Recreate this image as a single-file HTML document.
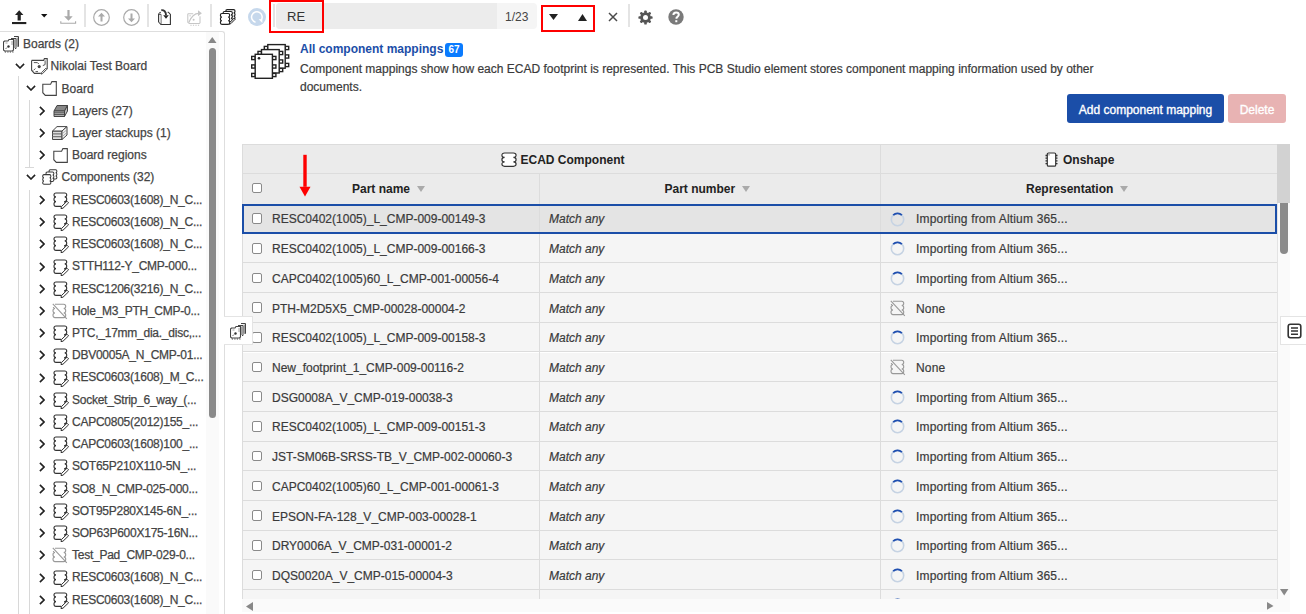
<!DOCTYPE html>
<html><head><meta charset="utf-8">
<style>
*{box-sizing:border-box;margin:0;padding:0}
html,body{width:1306px;height:614px;overflow:hidden;background:#fff;font-family:"Liberation Sans",sans-serif;color:#333;font-size:12px}
.abs{position:absolute}
.sep{position:absolute;top:4px;width:2px;height:23px;background:#e4e4e4}
#tree{position:absolute;left:0;top:31px;width:225px;height:583px;border-top:1px solid #dedede;border-right:1px solid #dedede;border-top-right-radius:3px;overflow:hidden;background:#fff}
.trow{position:absolute;left:0;width:205px;height:22.25px}
.chev{position:absolute}
.ticon{position:absolute;line-height:0}
.ttext{position:absolute;top:2.5px;white-space:nowrap;line-height:15px;color:#444;-webkit-text-stroke:.25px #444}
.trow:nth-child(n+8) .ttext{letter-spacing:-0.25px}
.guide{position:absolute;width:1px;background:#d8d8d8}
.drow{position:absolute;left:242px;width:1035px;height:29.7px;background:#f5f5f5;border-bottom:1px solid #dcdcdc}
.drow.sel{background:#e4e4e4;border:2px solid #1b4ea8;}
.cb{position:absolute;width:10.6px;height:10.6px;border:1px solid #8a8a8a;border-radius:2px;background:#fff}
.dname{position:absolute;left:30px;top:8.6px;line-height:15px;white-space:nowrap;color:#3a3a3a;-webkit-text-stroke:.2px #3a3a3a}
.dmatch{position:absolute;left:307px;top:8.6px;line-height:15px;font-style:italic;white-space:nowrap;color:#3a3a3a;-webkit-text-stroke:.2px #3a3a3a}
.dicon{position:absolute;left:648px;top:7.5px;line-height:0}
.drep{position:absolute;left:674px;top:8.6px;letter-spacing:.18px;line-height:15px;white-space:nowrap;color:#3a3a3a;-webkit-text-stroke:.2px #3a3a3a}
.drow.sel .cb{left:7.5px!important;top:7.3px!important}
.drow.sel .dname{left:28px;top:5.6px}
.drow.sel .dmatch{left:305px;top:5.6px}
.drow.sel .dicon{left:646px;top:5.5px}
.drow.sel .drep{left:672px;top:5.6px}
.vcol{position:absolute;width:1px;background:#dcdcdc}
.hdr{position:absolute;font-weight:bold;color:#222;white-space:nowrap;line-height:15px}
.sorta{display:inline-block;width:0;height:0;border-left:4.5px solid transparent;border-right:4.5px solid transparent;border-top:6px solid #aaa;margin-left:6.5px;vertical-align:1px}
</style></head><body>

<!-- toolbar -->
<svg class="abs" style="left:12px;top:10px" width="15" height="15" viewBox="0 0 15 15"><path d="M7.2 .2L3 5H5.6V10.4H8.8V5H11.4z" fill="#222"/><rect x="0" y="12" width="14.3" height="2.1" fill="#222"/></svg>
<svg class="abs" style="left:41px;top:13.8px" width="7" height="4" viewBox="0 0 7 4"><path d="M0 0h6.4L3.2 3.6z" fill="#111"/></svg>
<svg class="abs" style="left:60px;top:10px" width="17" height="15" viewBox="0 0 17 15"><path d="M7.4 0h2.2v6.2h3.1L8.5 10.7 4.1 6.2h3.3z" fill="#aaa"/><path d="M.8 11.2v2.1h14.8v-2.1" fill="none" stroke="#aaa" stroke-width="1.1"/></svg>
<div class="sep" style="left:84px"></div>
<svg class="abs" style="left:93px;top:8.5px" width="17" height="17" viewBox="0 0 17 17"><circle cx="8.5" cy="8.5" r="7.8" fill="none" stroke="#aaa" stroke-width="1.2"/><path d="M8.5 3.8L5 7.5h2.5v5h2v-5H12z" fill="#aaa"/></svg>
<svg class="abs" style="left:122.5px;top:8.5px" width="17" height="17" viewBox="0 0 17 17"><circle cx="8.5" cy="8.5" r="7.8" fill="none" stroke="#aaa" stroke-width="1.2"/><path d="M8.5 13.2L5 9.5h2.5v-5h2v5H12z" fill="#aaa"/></svg>
<div class="sep" style="left:147px"></div>
<svg class="abs" style="left:158px;top:9px" width="13" height="16" viewBox="0 0 13 16" fill="none" stroke="#333" stroke-width="1.1"><path d="M3 5.3H.6v7.6l2.4 2.6h9.4V5.4L10.4 3.2H9.6" /><path d="M.6 5.3L1.6 3.4H3M3 5.3v10.2" stroke="#555" stroke-width="1"/><path d="M1.2 6v7l1.4 1.5V6z" fill="#ddd" stroke="none"/><path d="M3.3 1.2C6 .9 8 2.6 8 6" stroke-width="1.9"/><path d="M5.2 6.2h5.6L8 9.8z" fill="#222" stroke="none"/></svg>
<svg class="abs" style="left:186.5px;top:9.5px" width="15" height="16" viewBox="0 0 15 16" fill="none" stroke="#c6c6c6" stroke-width="1.05"><path d="M.8 3.8H6.2M.8 3.8V12.3L2.3 13.5H12.3L13 12.8V6.3"/><path d="M2.2 5.8H4" stroke-width=".8"/><circle cx="6.6" cy="9.7" r="1" fill="#c6c6c6" stroke="none"/><path d="M1.8 12.4C3.6 8 6.6 3.3 11.8 3.3" stroke-width="1.3"/><path d="M11 .2L14.9 3.3 11 6.3z" fill="#c6c6c6" stroke="none"/><path d="M3.4 15.2h1.2M5.9 15.2h1.2M8.4 15.2h1.2M10.9 15.2h1.2" stroke-width="1.1"/></svg>
<div class="sep" style="left:209.5px"></div>
<svg class="abs" style="left:219px;top:9px" width="17" height="16" viewBox="0 0 17 16" fill="#fff" stroke="#222" stroke-width="1.2"><path d="M8.20 0.70H14.60C16.46 0.70 16.46 3.93 14.60 3.93C16.46 3.93 16.46 7.17 14.60 7.17C16.46 7.17 16.46 10.40 14.60 10.40H8.20C6.34 10.40 6.34 7.17 8.20 7.17C6.34 7.17 6.34 3.93 8.20 3.93C6.34 3.93 6.34 0.70 8.20 0.70Z"/><path d="M5.50 2.50H12.00C13.86 2.50 13.86 5.87 12.00 5.87C13.86 5.87 13.86 9.23 12.00 9.23C13.86 9.23 13.86 12.60 12.00 12.60H5.50C3.64 12.60 3.64 9.23 5.50 9.23C3.64 9.23 3.64 5.87 5.50 5.87C3.64 5.87 3.64 2.50 5.50 2.50Z"/><path d="M2.90 4.50H9.20C11.20 4.50 11.20 8.10 9.20 8.10C11.20 8.10 11.20 11.70 9.20 11.70C11.20 11.70 11.20 15.30 9.20 15.30H2.90C0.90 15.30 0.90 11.70 2.90 11.70C0.90 11.70 0.90 8.10 2.90 8.10C0.90 8.10 0.90 4.50 2.90 4.50Z"/><path d="M16.2 10.2L11.9 14.6L10.3 15.2L10.8 13.6L15.1 9.1Z" stroke-width="1"/></svg>
<svg class="abs" style="left:248px;top:8.2px" width="18" height="18" viewBox="0 0 18 18"><circle cx="9" cy="9" r="9" fill="#c6d8ec"/><path d="M7.6 14.2A5.3 5.3 0 1 1 12.8 12.6" fill="none" stroke="#fff" stroke-width="1.5"/><path d="M10.6 11.3h3.8v3.8z" fill="#fff"/><path d="M9 12.8v3.5" stroke="#c6d8ec" stroke-width="2.2"/></svg>

<!-- search -->
<div class="abs" style="left:273px;top:4px;width:2px;height:23px;background:#e4e4e4"></div>
<div class="abs" style="left:276px;top:3px;width:261px;height:25.5px;background:#f5f5f5;border-radius:4px"></div>
<div class="abs" style="left:276px;top:3px;width:220.5px;height:25.5px;background:#ececec;border-radius:4px 0 0 4px"></div>
<div class="abs" style="left:287px;top:8.5px;font-size:13px;line-height:16px;color:#333">RE</div>
<div class="abs" style="left:505px;top:10px;font-size:12px;line-height:15px;color:#444">1/23</div>
<div class="abs" style="left:268.5px;top:-0.2px;width:55px;height:33.2px;border:2.5px solid #fe0000"></div>
<div class="abs" style="left:541px;top:4.5px;width:54px;height:27.5px;border:2.3px solid #fe0000"></div>
<svg class="abs" style="left:548.5px;top:14px" width="9" height="6" viewBox="0 0 9 6"><path d="M0 0h9L4.5 6z" fill="#222"/></svg>
<svg class="abs" style="left:578px;top:13.5px" width="9" height="7" viewBox="0 0 9 7"><path d="M0 7h9L4.5 0z" fill="#222"/></svg>
<svg class="abs" style="left:607.5px;top:12px" width="10" height="10" viewBox="0 0 10 10"><path d="M1 1l8 8M9 1L1 9" stroke="#4a4a4a" stroke-width="1.5"/></svg>
<div class="sep" style="left:628px;width:1.5px"></div>
<svg class="abs" style="left:637.7px;top:9.6px" width="15" height="15" viewBox="-7.5 -7.5 15 15"><g fill="#555"><circle r="5.3"/><rect x="-1.3" y="-7.1" width="2.6" height="3" rx=".9" transform="rotate(0)"/><rect x="-1.3" y="-7.1" width="2.6" height="3" rx=".9" transform="rotate(45)"/><rect x="-1.3" y="-7.1" width="2.6" height="3" rx=".9" transform="rotate(90)"/><rect x="-1.3" y="-7.1" width="2.6" height="3" rx=".9" transform="rotate(135)"/><rect x="-1.3" y="-7.1" width="2.6" height="3" rx=".9" transform="rotate(180)"/><rect x="-1.3" y="-7.1" width="2.6" height="3" rx=".9" transform="rotate(225)"/><rect x="-1.3" y="-7.1" width="2.6" height="3" rx=".9" transform="rotate(270)"/><rect x="-1.3" y="-7.1" width="2.6" height="3" rx=".9" transform="rotate(315)"/></g><circle r="2.5" fill="#fff"/></svg>
<svg class="abs" style="left:667.5px;top:9.3px" width="16" height="16" viewBox="0 0 16 16"><circle cx="8" cy="8" r="7.7" fill="#7a7a7a"/><path d="M5.4 6.1c0-1.7 1.2-2.6 2.7-2.6s2.7 .9 2.7 2.3c0 1.6-1.9 1.9-2.3 3.1v.8" fill="none" stroke="#fff" stroke-width="2"/><rect x="7.3" y="11.2" width="2" height="2" fill="#fff"/></svg>

<!-- tree -->
<div id="tree">
<div class="guide" style="left:18px;top:44px;height:540px"></div>
<div class="guide" style="left:29px;top:68px;height:67px"></div>
<div class="guide" style="left:25px;top:135px;height:1px;width:9px"></div>
<div class="guide" style="left:29px;top:157.5px;height:430px"></div>
<div style="position:absolute;left:0;top:-31px">
<div class="trow" style="top:33.60px">
<span class="ticon" style="left:3px;top:1.4px"><svg width="17" height="17" viewBox="0 0 17 17" fill="none" stroke="#444" stroke-width="1"><path d="M11 .5H15.5V10.5H14.5"/><path d="M14.3 1.5V10" stroke="#999" stroke-width="1.3"/><path d="M8 2.5H13V12.5H12"/><path d="M11.8 3.5V12" stroke="#999" stroke-width="1.3"/><path d="M.5 6L1.5 5H5L6 3.5H10.5V14L9.5 15H1.5L.5 14Z" fill="#fff" stroke-width="1.1"/><path d="M2.5 7H4.5M9 5V9" stroke="#888" stroke-width=".8"/><circle cx="5.5" cy="10.5" r="1.2" fill="#333" stroke="none"/><path d="M2.5 13L4 11.5" stroke-width=".8"/><path d="M1.8 16H3M4.3 16H5.5M6.8 16H8M9.3 16H10.5" stroke-width="1.1"/></svg></span>
<span class="ttext" style="left:23px">Boards (2)</span>
</div>
<div class="trow" style="top:55.82px">
<svg class="chev" style="left:15px;top:6.3px" width="10" height="6" viewBox="0 0 10 6"><path d="M.9 .9l4.1 4.1L9.1 .9" fill="none" stroke="#222" stroke-width="1.6"/></svg>
<span class="ticon" style="left:30.5px;top:1.25px"><svg width="17" height="17" viewBox="0 0 17 17" fill="none" stroke="#444" stroke-width="1.1"><path d="M.6 2.4H12.6L13.4 .6H16.2V11M.6 2.4V12.2L3.4 15.4H9.8"/><path d="M2.8 4.6H6.4L7.9 6.1M14.1 2.4V6.6L11.8 7.6M2.6 12.3L4.4 10.5M4.5 13.6H7" stroke-width=".9"/><circle cx="8.2" cy="8.6" r="1.6" fill="#444" stroke="none"/><path d="M15.9 11.2L11.6 15.6L10.1 16.1L10.6 14.6L14.9 10.2Z" stroke-width="1" fill="#fff"/></svg></span>
<span class="ttext" style="left:50.6px">Nikolai Test Board</span>
</div>
<div class="trow" style="top:78.04px">
<svg class="chev" style="left:25.8px;top:6.3px" width="10" height="6" viewBox="0 0 10 6"><path d="M.9 .9l4.1 4.1L9.1 .9" fill="none" stroke="#222" stroke-width="1.6"/></svg>
<span class="ticon" style="left:42px;top:2.3px"><svg width="15" height="15" viewBox="0 0 15 15" fill="none" stroke="#444" stroke-width="1.1"><path d="M0.8 3.2h7.8l1.3-2.6h4.4v13.8h-11l-2.5-2.7z"/></svg></span>
<span class="ttext" style="left:61.6px">Board</span>
</div>
<div class="trow" style="top:100.26px">
<svg class="chev" style="left:38.5px;top:4.8px" width="6" height="10" viewBox="0 0 6 10"><path d="M.9 .9l4.1 4.1L.9 9.1" fill="none" stroke="#222" stroke-width="1.6"/></svg>
<span class="ticon" style="left:52.6px;top:3.5px"><svg width="15" height="13" viewBox="0 0 15 13" fill="none" stroke="#444" stroke-width="1"><path d="M4 .5h10.5l-3 5.5h-10.5z" fill="#888"/><path d="M1 6h10.5v5.5h-10.5zM11.5 6l3-5.5v5.5l-3 5.5" fill="#bbb"/><path d="M1 7.8h10.5M1 9.6h10.5" stroke-width=".9"/><path d="M1.5 11.5h10" stroke="#444"/></svg></span>
<span class="ttext" style="left:72px">Layers (27)</span>
</div>
<div class="trow" style="top:122.48px">
<svg class="chev" style="left:38.5px;top:4.8px" width="6" height="10" viewBox="0 0 6 10"><path d="M.9 .9l4.1 4.1L.9 9.1" fill="none" stroke="#222" stroke-width="1.6"/></svg>
<span class="ticon" style="left:52px;top:2.3px"><svg width="16" height="14" viewBox="0 0 16 14" fill="none" stroke="#444" stroke-width="1"><path d="M.5 5h9.5v8.5H.5z" fill="#ddd"/><path d="M.5 7.8h9.5M.5 10.6h9.5" stroke="#777" stroke-width="1.2"/><path d="M.5 5L5 .6H15L10 5z" fill="#fff"/><path d="M10 5L15 .6V9L10 13.5z" fill="#f2f2f2"/><path d="M10 8l5-4.4M10 10.8l5-4.4" stroke="#999" stroke-width=".8"/></svg></span>
<span class="ttext" style="left:72px">Layer stackups (1)</span>
</div>
<div class="trow" style="top:144.70px">
<svg class="chev" style="left:38.5px;top:4.8px" width="6" height="10" viewBox="0 0 6 10"><path d="M.9 .9l4.1 4.1L.9 9.1" fill="none" stroke="#222" stroke-width="1.6"/></svg>
<span class="ticon" style="left:52.6px;top:2.3px"><svg width="15" height="15" viewBox="0 0 15 15" fill="none" stroke="#444" stroke-width="1.1"><path d="M0.8 3.2h7.8l1.3-2.6h4.4v13.8h-11l-2.5-2.7z"/></svg></span>
<span class="ttext" style="left:72px">Board regions</span>
</div>
<div class="trow" style="top:166.92px">
<svg class="chev" style="left:25.8px;top:6.3px" width="10" height="6" viewBox="0 0 10 6"><path d="M.9 .9l4.1 4.1L9.1 .9" fill="none" stroke="#222" stroke-width="1.6"/></svg>
<span class="ticon" style="left:40.6px;top:1.4px"><svg width="17" height="16" viewBox="0 0 17 16" fill="#fff" stroke="#3a3a3a" stroke-width="1.05"><path d="M9.30 0.70H14.60C16.33 0.70 16.33 3.80 14.60 3.80C16.33 3.80 16.33 6.90 14.60 6.90C16.33 6.90 16.33 10.00 14.60 10.00H9.30C7.57 10.00 7.57 6.90 9.30 6.90C7.57 6.90 7.57 3.80 9.30 3.80C7.57 3.80 7.57 0.70 9.30 0.70Z"/><path d="M6.30 2.90H11.60C13.33 2.90 13.33 6.07 11.60 6.07C13.33 6.07 13.33 9.23 11.60 9.23C13.33 9.23 13.33 12.40 11.60 12.40H6.30C4.57 12.40 4.57 9.23 6.30 9.23C4.57 9.23 4.57 6.07 6.30 6.07C4.57 6.07 4.57 2.90 6.30 2.90Z"/><path d="M3.00 5.60H8.60C10.33 5.60 10.33 8.83 8.60 8.83C10.33 8.83 10.33 12.07 8.60 12.07C10.33 12.07 10.33 15.30 8.60 15.30H3.00C1.27 15.30 1.27 12.07 3.00 12.07C1.27 12.07 1.27 8.83 3.00 8.83C1.27 8.83 1.27 5.60 3.00 5.60Z"/></svg></span>
<span class="ttext" style="left:61.6px">Components (32)</span>
</div>
<div class="trow" style="top:189.14px">
<svg class="chev" style="left:38.5px;top:4.8px" width="6" height="10" viewBox="0 0 6 10"><path d="M.9 .9l4.1 4.1L.9 9.1" fill="none" stroke="#222" stroke-width="1.6"/></svg>
<span class="ticon" style="left:52.6px;top:1.85px"><svg width="16" height="17" viewBox="0 0 16 17" fill="none" stroke="#333" stroke-width="1.1"><path d="M3 1H11.7C14.4 1 14.4 4.9 11.7 4.9C14.4 4.9 14.4 9.6 11.7 9.6V10.8M3 1C.3 1 .3 4.9 3 4.9C.3 4.9 .3 9.6 3 9.6C.3 9.6 .3 14.4 3 14.4H8.2"/><path d="M14 9.2l1.6 1.6-5.6 5.4-2 .4.4-2z" stroke-width="1"/></svg></span>
<span class="ttext" style="left:72px">RESC0603(1608)_N_C...</span>
</div>
<div class="trow" style="top:211.36px">
<svg class="chev" style="left:38.5px;top:4.8px" width="6" height="10" viewBox="0 0 6 10"><path d="M.9 .9l4.1 4.1L.9 9.1" fill="none" stroke="#222" stroke-width="1.6"/></svg>
<span class="ticon" style="left:52.6px;top:1.85px"><svg width="16" height="17" viewBox="0 0 16 17" fill="none" stroke="#333" stroke-width="1.1"><path d="M3 1H11.7C14.4 1 14.4 4.9 11.7 4.9C14.4 4.9 14.4 9.6 11.7 9.6V10.8M3 1C.3 1 .3 4.9 3 4.9C.3 4.9 .3 9.6 3 9.6C.3 9.6 .3 14.4 3 14.4H8.2"/><path d="M14 9.2l1.6 1.6-5.6 5.4-2 .4.4-2z" stroke-width="1"/></svg></span>
<span class="ttext" style="left:72px">RESC0603(1608)_N_C...</span>
</div>
<div class="trow" style="top:233.58px">
<svg class="chev" style="left:38.5px;top:4.8px" width="6" height="10" viewBox="0 0 6 10"><path d="M.9 .9l4.1 4.1L.9 9.1" fill="none" stroke="#222" stroke-width="1.6"/></svg>
<span class="ticon" style="left:52.6px;top:1.85px"><svg width="16" height="17" viewBox="0 0 16 17" fill="none" stroke="#333" stroke-width="1.1"><path d="M3 1H11.7C14.4 1 14.4 4.9 11.7 4.9C14.4 4.9 14.4 9.6 11.7 9.6V10.8M3 1C.3 1 .3 4.9 3 4.9C.3 4.9 .3 9.6 3 9.6C.3 9.6 .3 14.4 3 14.4H8.2"/><path d="M14 9.2l1.6 1.6-5.6 5.4-2 .4.4-2z" stroke-width="1"/></svg></span>
<span class="ttext" style="left:72px">RESC0603(1608)_N_C...</span>
</div>
<div class="trow" style="top:255.80px">
<svg class="chev" style="left:38.5px;top:4.8px" width="6" height="10" viewBox="0 0 6 10"><path d="M.9 .9l4.1 4.1L.9 9.1" fill="none" stroke="#222" stroke-width="1.6"/></svg>
<span class="ticon" style="left:52.6px;top:1.85px"><svg width="16" height="17" viewBox="0 0 16 17" fill="none" stroke="#333" stroke-width="1.1"><path d="M3 1H11.7C14.4 1 14.4 4.9 11.7 4.9C14.4 4.9 14.4 9.6 11.7 9.6V10.8M3 1C.3 1 .3 4.9 3 4.9C.3 4.9 .3 9.6 3 9.6C.3 9.6 .3 14.4 3 14.4H8.2"/><path d="M14 9.2l1.6 1.6-5.6 5.4-2 .4.4-2z" stroke-width="1"/></svg></span>
<span class="ttext" style="left:72px">STTH112-Y_CMP-000...</span>
</div>
<div class="trow" style="top:278.02px">
<svg class="chev" style="left:38.5px;top:4.8px" width="6" height="10" viewBox="0 0 6 10"><path d="M.9 .9l4.1 4.1L.9 9.1" fill="none" stroke="#222" stroke-width="1.6"/></svg>
<span class="ticon" style="left:52.6px;top:1.85px"><svg width="16" height="17" viewBox="0 0 16 17" fill="none" stroke="#333" stroke-width="1.1"><path d="M3 1H11.7C14.4 1 14.4 4.9 11.7 4.9C14.4 4.9 14.4 9.6 11.7 9.6V10.8M3 1C.3 1 .3 4.9 3 4.9C.3 4.9 .3 9.6 3 9.6C.3 9.6 .3 14.4 3 14.4H8.2"/><path d="M14 9.2l1.6 1.6-5.6 5.4-2 .4.4-2z" stroke-width="1"/></svg></span>
<span class="ttext" style="left:72px">RESC1206(3216)_N_C...</span>
</div>
<div class="trow" style="top:300.24px">
<svg class="chev" style="left:38.5px;top:4.8px" width="6" height="10" viewBox="0 0 6 10"><path d="M.9 .9l4.1 4.1L.9 9.1" fill="none" stroke="#222" stroke-width="1.6"/></svg>
<span class="ticon" style="left:52.4px;top:1.5px"><svg width="16" height="17" viewBox="0 0 16 17" fill="none" stroke="#999" stroke-width="1.1"><path d="M3 1.2H11.7C14.4 1.2 14.4 5.5 11.7 5.5C14.4 5.5 14.4 10 11.7 10C14.4 10 14.4 14.6 11.7 14.6H3C.3 14.6 .3 10 3 10C.3 10 .3 5.5 3 5.5C2 5.5 1.4 4.8 1.3 4"/><path d="M.8 .8l14 15" stroke-width="1.1"/></svg></span>
<span class="ttext" style="left:72px">Hole_M3_PTH_CMP-0...</span>
</div>
<div class="trow" style="top:322.46px">
<svg class="chev" style="left:38.5px;top:4.8px" width="6" height="10" viewBox="0 0 6 10"><path d="M.9 .9l4.1 4.1L.9 9.1" fill="none" stroke="#222" stroke-width="1.6"/></svg>
<span class="ticon" style="left:52.6px;top:1.85px"><svg width="16" height="17" viewBox="0 0 16 17" fill="none" stroke="#333" stroke-width="1.1"><path d="M3 1H11.7C14.4 1 14.4 4.9 11.7 4.9C14.4 4.9 14.4 9.6 11.7 9.6V10.8M3 1C.3 1 .3 4.9 3 4.9C.3 4.9 .3 9.6 3 9.6C.3 9.6 .3 14.4 3 14.4H8.2"/><path d="M14 9.2l1.6 1.6-5.6 5.4-2 .4.4-2z" stroke-width="1"/></svg></span>
<span class="ttext" style="left:72px">PTC,_17mm_dia._disc,...</span>
</div>
<div class="trow" style="top:344.68px">
<svg class="chev" style="left:38.5px;top:4.8px" width="6" height="10" viewBox="0 0 6 10"><path d="M.9 .9l4.1 4.1L.9 9.1" fill="none" stroke="#222" stroke-width="1.6"/></svg>
<span class="ticon" style="left:52.6px;top:1.85px"><svg width="16" height="17" viewBox="0 0 16 17" fill="none" stroke="#333" stroke-width="1.1"><path d="M3 1H11.7C14.4 1 14.4 4.9 11.7 4.9C14.4 4.9 14.4 9.6 11.7 9.6V10.8M3 1C.3 1 .3 4.9 3 4.9C.3 4.9 .3 9.6 3 9.6C.3 9.6 .3 14.4 3 14.4H8.2"/><path d="M14 9.2l1.6 1.6-5.6 5.4-2 .4.4-2z" stroke-width="1"/></svg></span>
<span class="ttext" style="left:72px">DBV0005A_N_CMP-01...</span>
</div>
<div class="trow" style="top:366.90px">
<svg class="chev" style="left:38.5px;top:4.8px" width="6" height="10" viewBox="0 0 6 10"><path d="M.9 .9l4.1 4.1L.9 9.1" fill="none" stroke="#222" stroke-width="1.6"/></svg>
<span class="ticon" style="left:52.6px;top:1.85px"><svg width="16" height="17" viewBox="0 0 16 17" fill="none" stroke="#333" stroke-width="1.1"><path d="M3 1H11.7C14.4 1 14.4 4.9 11.7 4.9C14.4 4.9 14.4 9.6 11.7 9.6V10.8M3 1C.3 1 .3 4.9 3 4.9C.3 4.9 .3 9.6 3 9.6C.3 9.6 .3 14.4 3 14.4H8.2"/><path d="M14 9.2l1.6 1.6-5.6 5.4-2 .4.4-2z" stroke-width="1"/></svg></span>
<span class="ttext" style="left:72px">RESC0603(1608)_M_C...</span>
</div>
<div class="trow" style="top:389.12px">
<svg class="chev" style="left:38.5px;top:4.8px" width="6" height="10" viewBox="0 0 6 10"><path d="M.9 .9l4.1 4.1L.9 9.1" fill="none" stroke="#222" stroke-width="1.6"/></svg>
<span class="ticon" style="left:52.6px;top:1.85px"><svg width="16" height="17" viewBox="0 0 16 17" fill="none" stroke="#333" stroke-width="1.1"><path d="M3 1H11.7C14.4 1 14.4 4.9 11.7 4.9C14.4 4.9 14.4 9.6 11.7 9.6V10.8M3 1C.3 1 .3 4.9 3 4.9C.3 4.9 .3 9.6 3 9.6C.3 9.6 .3 14.4 3 14.4H8.2"/><path d="M14 9.2l1.6 1.6-5.6 5.4-2 .4.4-2z" stroke-width="1"/></svg></span>
<span class="ttext" style="left:72px">Socket_Strip_6_way_(...</span>
</div>
<div class="trow" style="top:411.34px">
<svg class="chev" style="left:38.5px;top:4.8px" width="6" height="10" viewBox="0 0 6 10"><path d="M.9 .9l4.1 4.1L.9 9.1" fill="none" stroke="#222" stroke-width="1.6"/></svg>
<span class="ticon" style="left:52.6px;top:1.85px"><svg width="16" height="17" viewBox="0 0 16 17" fill="none" stroke="#333" stroke-width="1.1"><path d="M3 1H11.7C14.4 1 14.4 4.9 11.7 4.9C14.4 4.9 14.4 9.6 11.7 9.6V10.8M3 1C.3 1 .3 4.9 3 4.9C.3 4.9 .3 9.6 3 9.6C.3 9.6 .3 14.4 3 14.4H8.2"/><path d="M14 9.2l1.6 1.6-5.6 5.4-2 .4.4-2z" stroke-width="1"/></svg></span>
<span class="ttext" style="left:72px">CAPC0805(2012)155_...</span>
</div>
<div class="trow" style="top:433.56px">
<svg class="chev" style="left:38.5px;top:4.8px" width="6" height="10" viewBox="0 0 6 10"><path d="M.9 .9l4.1 4.1L.9 9.1" fill="none" stroke="#222" stroke-width="1.6"/></svg>
<span class="ticon" style="left:52.6px;top:1.85px"><svg width="16" height="17" viewBox="0 0 16 17" fill="none" stroke="#333" stroke-width="1.1"><path d="M3 1H11.7C14.4 1 14.4 4.9 11.7 4.9C14.4 4.9 14.4 9.6 11.7 9.6V10.8M3 1C.3 1 .3 4.9 3 4.9C.3 4.9 .3 9.6 3 9.6C.3 9.6 .3 14.4 3 14.4H8.2"/><path d="M14 9.2l1.6 1.6-5.6 5.4-2 .4.4-2z" stroke-width="1"/></svg></span>
<span class="ttext" style="left:72px">CAPC0603(1608)100_...</span>
</div>
<div class="trow" style="top:455.78px">
<svg class="chev" style="left:38.5px;top:4.8px" width="6" height="10" viewBox="0 0 6 10"><path d="M.9 .9l4.1 4.1L.9 9.1" fill="none" stroke="#222" stroke-width="1.6"/></svg>
<span class="ticon" style="left:52.6px;top:1.85px"><svg width="16" height="17" viewBox="0 0 16 17" fill="none" stroke="#333" stroke-width="1.1"><path d="M3 1H11.7C14.4 1 14.4 4.9 11.7 4.9C14.4 4.9 14.4 9.6 11.7 9.6V10.8M3 1C.3 1 .3 4.9 3 4.9C.3 4.9 .3 9.6 3 9.6C.3 9.6 .3 14.4 3 14.4H8.2"/><path d="M14 9.2l1.6 1.6-5.6 5.4-2 .4.4-2z" stroke-width="1"/></svg></span>
<span class="ttext" style="left:72px">SOT65P210X110-5N_...</span>
</div>
<div class="trow" style="top:478.00px">
<svg class="chev" style="left:38.5px;top:4.8px" width="6" height="10" viewBox="0 0 6 10"><path d="M.9 .9l4.1 4.1L.9 9.1" fill="none" stroke="#222" stroke-width="1.6"/></svg>
<span class="ticon" style="left:52.6px;top:1.85px"><svg width="16" height="17" viewBox="0 0 16 17" fill="none" stroke="#333" stroke-width="1.1"><path d="M3 1H11.7C14.4 1 14.4 4.9 11.7 4.9C14.4 4.9 14.4 9.6 11.7 9.6V10.8M3 1C.3 1 .3 4.9 3 4.9C.3 4.9 .3 9.6 3 9.6C.3 9.6 .3 14.4 3 14.4H8.2"/><path d="M14 9.2l1.6 1.6-5.6 5.4-2 .4.4-2z" stroke-width="1"/></svg></span>
<span class="ttext" style="left:72px">SO8_N_CMP-025-000...</span>
</div>
<div class="trow" style="top:500.22px">
<svg class="chev" style="left:38.5px;top:4.8px" width="6" height="10" viewBox="0 0 6 10"><path d="M.9 .9l4.1 4.1L.9 9.1" fill="none" stroke="#222" stroke-width="1.6"/></svg>
<span class="ticon" style="left:52.6px;top:1.85px"><svg width="16" height="17" viewBox="0 0 16 17" fill="none" stroke="#333" stroke-width="1.1"><path d="M3 1H11.7C14.4 1 14.4 4.9 11.7 4.9C14.4 4.9 14.4 9.6 11.7 9.6V10.8M3 1C.3 1 .3 4.9 3 4.9C.3 4.9 .3 9.6 3 9.6C.3 9.6 .3 14.4 3 14.4H8.2"/><path d="M14 9.2l1.6 1.6-5.6 5.4-2 .4.4-2z" stroke-width="1"/></svg></span>
<span class="ttext" style="left:72px">SOT95P280X145-6N_...</span>
</div>
<div class="trow" style="top:522.44px">
<svg class="chev" style="left:38.5px;top:4.8px" width="6" height="10" viewBox="0 0 6 10"><path d="M.9 .9l4.1 4.1L.9 9.1" fill="none" stroke="#222" stroke-width="1.6"/></svg>
<span class="ticon" style="left:52.6px;top:1.85px"><svg width="16" height="17" viewBox="0 0 16 17" fill="none" stroke="#333" stroke-width="1.1"><path d="M3 1H11.7C14.4 1 14.4 4.9 11.7 4.9C14.4 4.9 14.4 9.6 11.7 9.6V10.8M3 1C.3 1 .3 4.9 3 4.9C.3 4.9 .3 9.6 3 9.6C.3 9.6 .3 14.4 3 14.4H8.2"/><path d="M14 9.2l1.6 1.6-5.6 5.4-2 .4.4-2z" stroke-width="1"/></svg></span>
<span class="ttext" style="left:72px">SOP63P600X175-16N...</span>
</div>
<div class="trow" style="top:544.66px">
<svg class="chev" style="left:38.5px;top:4.8px" width="6" height="10" viewBox="0 0 6 10"><path d="M.9 .9l4.1 4.1L.9 9.1" fill="none" stroke="#222" stroke-width="1.6"/></svg>
<span class="ticon" style="left:52.4px;top:1.5px"><svg width="16" height="17" viewBox="0 0 16 17" fill="none" stroke="#999" stroke-width="1.1"><path d="M3 1.2H11.7C14.4 1.2 14.4 5.5 11.7 5.5C14.4 5.5 14.4 10 11.7 10C14.4 10 14.4 14.6 11.7 14.6H3C.3 14.6 .3 10 3 10C.3 10 .3 5.5 3 5.5C2 5.5 1.4 4.8 1.3 4"/><path d="M.8 .8l14 15" stroke-width="1.1"/></svg></span>
<span class="ttext" style="left:72px">Test_Pad_CMP-029-0...</span>
</div>
<div class="trow" style="top:566.88px">
<svg class="chev" style="left:38.5px;top:4.8px" width="6" height="10" viewBox="0 0 6 10"><path d="M.9 .9l4.1 4.1L.9 9.1" fill="none" stroke="#222" stroke-width="1.6"/></svg>
<span class="ticon" style="left:52.6px;top:1.85px"><svg width="16" height="17" viewBox="0 0 16 17" fill="none" stroke="#333" stroke-width="1.1"><path d="M3 1H11.7C14.4 1 14.4 4.9 11.7 4.9C14.4 4.9 14.4 9.6 11.7 9.6V10.8M3 1C.3 1 .3 4.9 3 4.9C.3 4.9 .3 9.6 3 9.6C.3 9.6 .3 14.4 3 14.4H8.2"/><path d="M14 9.2l1.6 1.6-5.6 5.4-2 .4.4-2z" stroke-width="1"/></svg></span>
<span class="ttext" style="left:72px">RESC0603(1608)_N_C...</span>
</div>
<div class="trow" style="top:589.10px">
<svg class="chev" style="left:38.5px;top:4.8px" width="6" height="10" viewBox="0 0 6 10"><path d="M.9 .9l4.1 4.1L.9 9.1" fill="none" stroke="#222" stroke-width="1.6"/></svg>
<span class="ticon" style="left:52.6px;top:1.85px"><svg width="16" height="17" viewBox="0 0 16 17" fill="none" stroke="#333" stroke-width="1.1"><path d="M3 1H11.7C14.4 1 14.4 4.9 11.7 4.9C14.4 4.9 14.4 9.6 11.7 9.6V10.8M3 1C.3 1 .3 4.9 3 4.9C.3 4.9 .3 9.6 3 9.6C.3 9.6 .3 14.4 3 14.4H8.2"/><path d="M14 9.2l1.6 1.6-5.6 5.4-2 .4.4-2z" stroke-width="1"/></svg></span>
<span class="ttext" style="left:72px">RESC0603(1608)_N_C...</span>
</div>
</div>
<!-- tree scrollbar -->
<div class="abs" style="left:205.5px;top:0;width:13px;height:583px;background:#fafafa"></div>
<svg class="abs" style="left:208px;top:5px" width="8.5" height="6" viewBox="0 0 8.5 6"><path d="M0 6h8.5L4.25 0z" fill="#888"/></svg>
<div class="abs" style="left:208.5px;top:16px;width:7.5px;height:370px;background:#8a8a8a;border-radius:4px"></div>
</div>

<!-- header info -->
<svg class="abs" style="left:250px;top:43px" width="41" height="38" viewBox="0 0 41 38" fill="none" stroke="#222" stroke-width="1.4"><rect x="14.3" y="3.4" width="3.5" height="3.2" fill="#fff"/><rect x="35.2" y="3.4" width="3.5" height="3.2" fill="#fff"/><rect x="14.3" y="11.9" width="3.5" height="3.2" fill="#fff"/><rect x="35.2" y="11.9" width="3.5" height="3.2" fill="#fff"/><rect x="14.3" y="20.4" width="3.5" height="3.2" fill="#fff"/><rect x="35.2" y="20.4" width="3.5" height="3.2" fill="#fff"/><rect x="17.8" y="1.6" width="17.4" height="23.6" fill="#fff"/><rect x="8.0" y="8.4" width="3.5" height="3.2" fill="#fff"/><rect x="29.2" y="8.4" width="3.5" height="3.2" fill="#fff"/><rect x="8.0" y="16.9" width="3.5" height="3.2" fill="#fff"/><rect x="29.2" y="16.9" width="3.5" height="3.2" fill="#fff"/><rect x="8.0" y="25.4" width="3.5" height="3.2" fill="#fff"/><rect x="29.2" y="25.4" width="3.5" height="3.2" fill="#fff"/><rect x="11.5" y="6.6" width="17.7" height="23.4" fill="#fff"/><rect x="1.7" y="13.4" width="3.5" height="3.2" fill="#fff"/><rect x="22.4" y="13.4" width="3.5" height="3.2" fill="#fff"/><rect x="1.7" y="21.9" width="3.5" height="3.2" fill="#fff"/><rect x="22.4" y="21.9" width="3.5" height="3.2" fill="#fff"/><rect x="1.7" y="30.4" width="3.5" height="3.2" fill="#fff"/><rect x="22.4" y="30.4" width="3.5" height="3.2" fill="#fff"/><rect x="5.2" y="11.3" width="17.2" height="24.0" fill="#fff"/><circle cx="9" cy="15.3" r="1.3" fill="#222" stroke="none"/></svg>
<div class="abs" style="left:300px;top:42px;font-weight:bold;color:#1b4ea8;line-height:15px">All component mappings</div>
<div class="abs" style="left:445px;top:42.5px;width:18px;height:14px;background:#0a7bff;border-radius:3px;color:#fff;font-size:10px;font-weight:bold;line-height:14px;text-align:center">67</div>
<div class="abs" style="left:300px;top:60px;width:820px;line-height:18px;color:#3a3a3a;-webkit-text-stroke:.2px #3a3a3a">Component mappings show how each ECAD footprint is represented. This PCB Studio element stores component mapping information used by other documents.</div>
<div class="abs" style="left:1067px;top:94px;width:157px;height:29px;background:#1b4ea8;border-radius:3px;color:#fff;line-height:33px;text-align:center;-webkit-text-stroke:.35px #fff">Add component mapping</div>
<div class="abs" style="left:1228px;top:94px;width:58px;height:29px;background:#e8b3b3;border-radius:3px;color:#fff;line-height:33px;text-align:center;-webkit-text-stroke:.35px #fff">Delete</div>

<!-- table -->
<div class="abs" style="left:242px;top:144px;width:1048px;height:455px;overflow:hidden">
<div style="position:absolute;left:-242px;top:-144px;width:1306px;height:614px">
<div class="abs" style="left:242px;top:144px;width:1035px;height:60px;background:#ebebeb;border-top:1px solid #dcdcdc;border-left:1px solid #dcdcdc"></div>
<div class="abs" style="left:242px;top:173px;width:1035px;height:1px;background:#dcdcdc"></div>
<div class="abs" style="left:1277px;top:144px;width:13px;height:59px;background:#d2d2d2"></div>
<div class="abs" style="left:1277px;top:203px;width:13px;height:400px;background:#fafafa"></div>
<div class="abs" style="left:1280px;top:203px;width:8px;height:51px;background:#8a8a8a;border-radius:0 0 4px 4px"></div>
<div class="abs" style="left:1277px;top:203px;width:1px;height:400px;background:#e3e3e3"></div>
<div class="drow sel" style="top:204.00px">
<span class="cb" style="left:9.5px;top:9.3px"></span>
<span class="dname">RESC0402(1005)_L_CMP-009-00149-3</span>
<span class="dmatch">Match any</span>
<span class="dicon"><svg width="15" height="15" viewBox="0 0 15 15"><circle cx="7.5" cy="7.5" r="6.2" fill="none" stroke="#c6d3e3" stroke-width="1.6"/><path d="M3.2 3.1A6.2 6.2 0 0 1 11.9 3.1" fill="none" stroke="#1f4fb0" stroke-width="1.8"/></svg></span><span class="drep">Importing from Altium 365...</span>
</div>
<div class="drow" style="top:233.70px">
<span class="cb" style="left:9.5px;top:9.3px"></span>
<span class="dname">RESC0402(1005)_L_CMP-009-00166-3</span>
<span class="dmatch">Match any</span>
<span class="dicon"><svg width="15" height="15" viewBox="0 0 15 15"><circle cx="7.5" cy="7.5" r="6.2" fill="none" stroke="#c6d3e3" stroke-width="1.6"/><path d="M3.2 3.1A6.2 6.2 0 0 1 11.9 3.1" fill="none" stroke="#1f4fb0" stroke-width="1.8"/></svg></span><span class="drep">Importing from Altium 365...</span>
</div>
<div class="drow" style="top:263.40px">
<span class="cb" style="left:9.5px;top:9.3px"></span>
<span class="dname">CAPC0402(1005)60_L_CMP-001-00056-4</span>
<span class="dmatch">Match any</span>
<span class="dicon"><svg width="15" height="15" viewBox="0 0 15 15"><circle cx="7.5" cy="7.5" r="6.2" fill="none" stroke="#c6d3e3" stroke-width="1.6"/><path d="M3.2 3.1A6.2 6.2 0 0 1 11.9 3.1" fill="none" stroke="#1f4fb0" stroke-width="1.8"/></svg></span><span class="drep">Importing from Altium 365...</span>
</div>
<div class="drow" style="top:293.10px">
<span class="cb" style="left:9.5px;top:9.3px"></span>
<span class="dname">PTH-M2D5X5_CMP-00028-00004-2</span>
<span class="dmatch">Match any</span>
<span class="dicon" style="top:6.5px"><svg width="16" height="17" viewBox="0 0 16 17" fill="none" stroke="#999" stroke-width="1.1"><path d="M3 1.2H11.7C14.4 1.2 14.4 5.5 11.7 5.5C14.4 5.5 14.4 10 11.7 10C14.4 10 14.4 14.6 11.7 14.6H3C.3 14.6 .3 10 3 10C.3 10 .3 5.5 3 5.5C2 5.5 1.4 4.8 1.3 4"/><path d="M.8 .8l14 15" stroke-width="1.1"/></svg></span><span class="drep">None</span>
</div>
<div class="drow" style="top:322.80px">
<span class="cb" style="left:9.5px;top:9.3px"></span>
<span class="dname">RESC0402(1005)_L_CMP-009-00158-3</span>
<span class="dmatch">Match any</span>
<span class="dicon"><svg width="15" height="15" viewBox="0 0 15 15"><circle cx="7.5" cy="7.5" r="6.2" fill="none" stroke="#c6d3e3" stroke-width="1.6"/><path d="M3.2 3.1A6.2 6.2 0 0 1 11.9 3.1" fill="none" stroke="#1f4fb0" stroke-width="1.8"/></svg></span><span class="drep">Importing from Altium 365...</span>
</div>
<div class="drow" style="top:352.50px">
<span class="cb" style="left:9.5px;top:9.3px"></span>
<span class="dname">New_footprint_1_CMP-009-00116-2</span>
<span class="dmatch">Match any</span>
<span class="dicon" style="top:6.5px"><svg width="16" height="17" viewBox="0 0 16 17" fill="none" stroke="#999" stroke-width="1.1"><path d="M3 1.2H11.7C14.4 1.2 14.4 5.5 11.7 5.5C14.4 5.5 14.4 10 11.7 10C14.4 10 14.4 14.6 11.7 14.6H3C.3 14.6 .3 10 3 10C.3 10 .3 5.5 3 5.5C2 5.5 1.4 4.8 1.3 4"/><path d="M.8 .8l14 15" stroke-width="1.1"/></svg></span><span class="drep">None</span>
</div>
<div class="drow" style="top:382.20px">
<span class="cb" style="left:9.5px;top:9.3px"></span>
<span class="dname">DSG0008A_V_CMP-019-00038-3</span>
<span class="dmatch">Match any</span>
<span class="dicon"><svg width="15" height="15" viewBox="0 0 15 15"><circle cx="7.5" cy="7.5" r="6.2" fill="none" stroke="#c6d3e3" stroke-width="1.6"/><path d="M3.2 3.1A6.2 6.2 0 0 1 11.9 3.1" fill="none" stroke="#1f4fb0" stroke-width="1.8"/></svg></span><span class="drep">Importing from Altium 365...</span>
</div>
<div class="drow" style="top:411.90px">
<span class="cb" style="left:9.5px;top:9.3px"></span>
<span class="dname">RESC0402(1005)_L_CMP-009-00151-3</span>
<span class="dmatch">Match any</span>
<span class="dicon"><svg width="15" height="15" viewBox="0 0 15 15"><circle cx="7.5" cy="7.5" r="6.2" fill="none" stroke="#c6d3e3" stroke-width="1.6"/><path d="M3.2 3.1A6.2 6.2 0 0 1 11.9 3.1" fill="none" stroke="#1f4fb0" stroke-width="1.8"/></svg></span><span class="drep">Importing from Altium 365...</span>
</div>
<div class="drow" style="top:441.60px">
<span class="cb" style="left:9.5px;top:9.3px"></span>
<span class="dname">JST-SM06B-SRSS-TB_V_CMP-002-00060-3</span>
<span class="dmatch">Match any</span>
<span class="dicon"><svg width="15" height="15" viewBox="0 0 15 15"><circle cx="7.5" cy="7.5" r="6.2" fill="none" stroke="#c6d3e3" stroke-width="1.6"/><path d="M3.2 3.1A6.2 6.2 0 0 1 11.9 3.1" fill="none" stroke="#1f4fb0" stroke-width="1.8"/></svg></span><span class="drep">Importing from Altium 365...</span>
</div>
<div class="drow" style="top:471.30px">
<span class="cb" style="left:9.5px;top:9.3px"></span>
<span class="dname">CAPC0402(1005)60_L_CMP-001-00061-3</span>
<span class="dmatch">Match any</span>
<span class="dicon"><svg width="15" height="15" viewBox="0 0 15 15"><circle cx="7.5" cy="7.5" r="6.2" fill="none" stroke="#c6d3e3" stroke-width="1.6"/><path d="M3.2 3.1A6.2 6.2 0 0 1 11.9 3.1" fill="none" stroke="#1f4fb0" stroke-width="1.8"/></svg></span><span class="drep">Importing from Altium 365...</span>
</div>
<div class="drow" style="top:501.00px">
<span class="cb" style="left:9.5px;top:9.3px"></span>
<span class="dname">EPSON-FA-128_V_CMP-003-00028-1</span>
<span class="dmatch">Match any</span>
<span class="dicon"><svg width="15" height="15" viewBox="0 0 15 15"><circle cx="7.5" cy="7.5" r="6.2" fill="none" stroke="#c6d3e3" stroke-width="1.6"/><path d="M3.2 3.1A6.2 6.2 0 0 1 11.9 3.1" fill="none" stroke="#1f4fb0" stroke-width="1.8"/></svg></span><span class="drep">Importing from Altium 365...</span>
</div>
<div class="drow" style="top:530.70px">
<span class="cb" style="left:9.5px;top:9.3px"></span>
<span class="dname">DRY0006A_V_CMP-031-00001-2</span>
<span class="dmatch">Match any</span>
<span class="dicon"><svg width="15" height="15" viewBox="0 0 15 15"><circle cx="7.5" cy="7.5" r="6.2" fill="none" stroke="#c6d3e3" stroke-width="1.6"/><path d="M3.2 3.1A6.2 6.2 0 0 1 11.9 3.1" fill="none" stroke="#1f4fb0" stroke-width="1.8"/></svg></span><span class="drep">Importing from Altium 365...</span>
</div>
<div class="drow" style="top:560.40px">
<span class="cb" style="left:9.5px;top:9.3px"></span>
<span class="dname">DQS0020A_V_CMP-015-00004-3</span>
<span class="dmatch">Match any</span>
<span class="dicon"><svg width="15" height="15" viewBox="0 0 15 15"><circle cx="7.5" cy="7.5" r="6.2" fill="none" stroke="#c6d3e3" stroke-width="1.6"/><path d="M3.2 3.1A6.2 6.2 0 0 1 11.9 3.1" fill="none" stroke="#1f4fb0" stroke-width="1.8"/></svg></span><span class="drep">Importing from Altium 365...</span>
</div>
<div class="drow" style="top:590.10px">
<span class="cb" style="left:9px;top:9.5px"></span>
<span class="dicon"><svg width="15" height="15" viewBox="0 0 15 15"><circle cx="7.5" cy="7.5" r="6.2" fill="none" stroke="#c6d3e3" stroke-width="1.6"/><path d="M3.2 3.1A6.2 6.2 0 0 1 11.9 3.1" fill="none" stroke="#1f4fb0" stroke-width="1.8"/></svg></span>
</div>
<div class="vcol" style="left:539px;top:174px;height:430px"></div>
<div class="vcol" style="left:880px;top:144px;height:460px"></div>
<div class="vcol" style="left:242px;top:144px;height:460px"></div>
<div class="abs" style="left:242px;top:204px;width:1035px;height:29.7px;border:2px solid #1b4ea8"></div>
<div class="abs" style="left:245px;top:206px;width:294px;height:26px;background:transparent"></div>
<svg class="abs" style="left:501px;top:151.5px" width="16" height="15" viewBox="0 0 16 15" fill="#fff" stroke="#333" stroke-width="1.15"><path d="M3.6 1H12.4C16 1 16 5.4 12.4 5.4C16 5.4 16 9.9 12.4 9.9C16 9.9 16 14.3 12.4 14.3H3.6C0 14.3 0 9.9 3.6 9.9C0 9.9 0 5.4 3.6 5.4C0 5.4 0 1 3.6 1Z"/></svg>
<div class="hdr" style="left:520.5px;top:153px">ECAD Component</div>
<svg class="abs" style="left:1044px;top:151.5px" width="15" height="15" viewBox="0 0 15 15" fill="#fff" stroke="#333" stroke-width="1.2"><path d="M1.5 3.5h2M1.5 6.2h2M1.5 8.9h2M1.5 11.6h2M11.5 3.5h2M11.5 6.2h2M11.5 8.9h2M11.5 11.6h2" stroke-width="1.3"/><rect x="3.3" y="1" width="8.4" height="13.2" rx="1.3"/><circle cx="5" cy="2.8" r=".6" fill="#333" stroke="none"/></svg>
<div class="hdr" style="left:1063px;top:153px">Onshape</div>
<span class="cb" style="left:251.5px;top:182.5px"></span>
<div class="hdr" style="left:352px;top:182px">Part name<span class="sorta"></span></div>
<div class="hdr" style="left:664.5px;top:182px">Part number<span class="sorta"></span></div>
<div class="hdr" style="left:1026px;top:182px">Representation<span class="sorta"></span></div>
</div></div>
<!-- horizontal scrollbar -->
<div class="abs" style="left:242px;top:598.5px;width:1048px;height:13px;background:#fafafa"></div>
<svg class="abs" style="left:246px;top:602px" width="7" height="9" viewBox="0 0 7 9"><path d="M7 0v9L0 4.5z" fill="#888"/></svg>
<svg class="abs" style="left:1267px;top:602px" width="7" height="8" viewBox="0 0 7 8"><path d="M0 0v7.8l6.5-3.9z" fill="#888"/></svg>
<svg class="abs" style="left:1279.8px;top:589px" width="9" height="7" viewBox="0 0 9 7"><path d="M0 0h8.4L4.2 6.6z" fill="#888"/></svg>
<!-- red arrow -->
<svg class="abs" style="left:299px;top:153.5px" width="12" height="43" viewBox="0 0 12 43"><path d="M4.3 .8h3.4v32h-3.4z" fill="#fe0000"/><path d="M.5 32.8h11L6 42.6z" fill="#fe0000"/></svg>
<!-- side tabs -->
<div class="abs" style="left:224px;top:315.5px;width:28.5px;height:29px;background:#fff;border:1px solid #e4e4e4;border-left:none"></div>
<span class="abs" style="left:229.5px;top:322.5px;line-height:0"><svg width="17" height="17" viewBox="0 0 17 17" fill="none" stroke="#444" stroke-width="1"><path d="M11 .5H15.5V10.5H14.5"/><path d="M14.3 1.5V10" stroke="#999" stroke-width="1.3"/><path d="M8 2.5H13V12.5H12"/><path d="M11.8 3.5V12" stroke="#999" stroke-width="1.3"/><path d="M.5 6L1.5 5H5L6 3.5H10.5V14L9.5 15H1.5L.5 14Z" fill="#fff" stroke-width="1.1"/><path d="M2.5 7H4.5M9 5V9" stroke="#888" stroke-width=".8"/><circle cx="5.5" cy="10.5" r="1.2" fill="#333" stroke="none"/><path d="M2.5 13L4 11.5" stroke-width=".8"/><path d="M1.8 16H3M4.3 16H5.5M6.8 16H8M9.3 16H10.5" stroke-width="1.1"/></svg></span>
<div class="abs" style="left:1280px;top:315.5px;width:27px;height:29px;background:#fff;border:1px solid #e4e4e4;border-right:none"></div>
<svg class="abs" style="left:1287px;top:322.5px" width="15" height="16" viewBox="0 0 15 16" fill="none" stroke="#333"><rect x="1.2" y="1.2" width="12.6" height="13.6" rx="2.2" stroke-width="1.6"/><path d="M4 5h7M4 8h7M4 11.2h7" stroke-width="1.4"/></svg>
</body></html>
